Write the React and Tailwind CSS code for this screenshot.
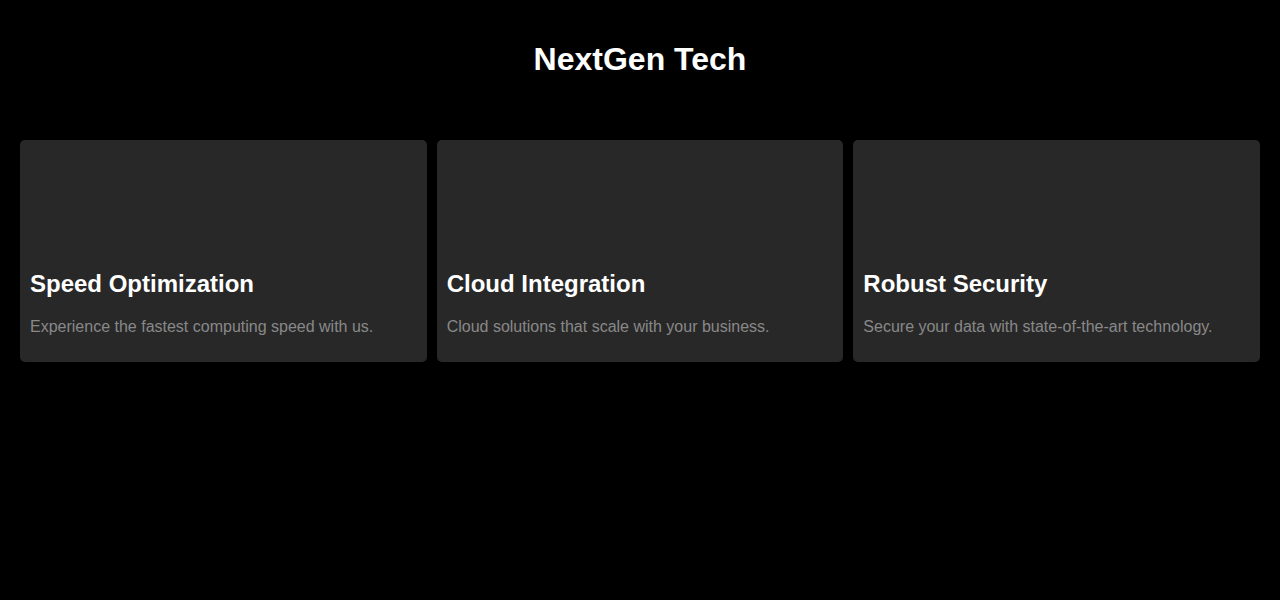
export default function App() {
  const cards = [
    { title: "Speed Optimization", text: "Experience the fastest computing speed with us." },
    { title: "Cloud Integration", text: "Cloud solutions that scale with your business." },
    { title: "Robust Security", text: "Secure your data with state-of-the-art technology." },
  ];

  return (
    <div className="min-h-[600px] bg-black text-white font-['Liberation_Sans',Arial,sans-serif]">
      <header className="pt-[41px] text-center">
        <h1 className="text-[32px] leading-[37px] font-bold">NextGen Tech</h1>
      </header>
      <main className="mt-[62px] px-5 grid grid-cols-3 gap-[10px]">
        {cards.map((c) => (
          <div key={c.title} className="bg-[#282828] rounded-[5px] p-[10px]">
            <div className="h-[100px]" />
            <h2 className="mt-5 text-2xl leading-[28px] font-bold">{c.title}</h2>
            <p className="mt-5 mb-4 text-base leading-[18px] text-[#888]">{c.text}</p>
          </div>
        ))}
      </main>
    </div>
  );
}
